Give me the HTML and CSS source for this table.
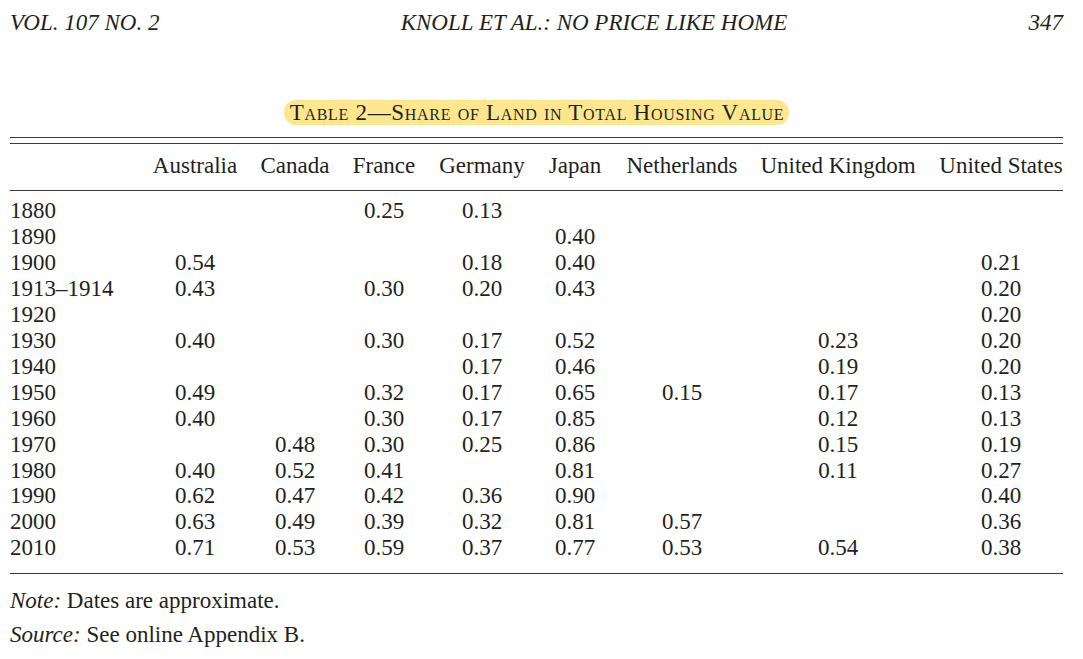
FILE: index.html
```html
<!DOCTYPE html>
<html>
<head>
<meta charset="utf-8">
<link rel="stylesheet" href="styles.css">
</head>
<body>
<div class="page">
  <header class="runhead">
    <span>VOL. 107 NO. 2</span>
    <span>KNOLL ET AL.: NO PRICE LIKE HOME</span>
    <span>347</span>
  </header>
  <div class="title-wrap">
    <span class="title">Table 2—Share of Land in Total Housing Value</span>
  </div>
  <div class="double-rule"></div>
  <table class="data">
    <colgroup>
      <col class="c0"><col class="c1"><col class="c2"><col class="c3"><col class="c4"><col class="c5"><col class="c6"><col class="c7"><col class="c8">
    </colgroup>
    <thead>
      <tr>
        <th></th><th>Australia</th><th>Canada</th><th>France</th><th>Germany</th><th>Japan</th><th>Netherlands</th><th>United Kingdom</th><th class="last">United States</th>
      </tr>
    </thead>
    <tbody>
      <tr class="first"><td>1880</td><td></td><td></td><td>0.25</td><td>0.13</td><td></td><td></td><td></td><td class="last"></td></tr>
      <tr><td>1890</td><td></td><td></td><td></td><td></td><td>0.40</td><td></td><td></td><td class="last"></td></tr>
      <tr><td>1900</td><td>0.54</td><td></td><td></td><td>0.18</td><td>0.40</td><td></td><td></td><td class="last">0.21</td></tr>
      <tr><td>1913–1914</td><td>0.43</td><td></td><td>0.30</td><td>0.20</td><td>0.43</td><td></td><td></td><td class="last">0.20</td></tr>
      <tr><td>1920</td><td></td><td></td><td></td><td></td><td></td><td></td><td></td><td class="last">0.20</td></tr>
      <tr><td>1930</td><td>0.40</td><td></td><td>0.30</td><td>0.17</td><td>0.52</td><td></td><td>0.23</td><td class="last">0.20</td></tr>
      <tr><td>1940</td><td></td><td></td><td></td><td>0.17</td><td>0.46</td><td></td><td>0.19</td><td class="last">0.20</td></tr>
      <tr><td>1950</td><td>0.49</td><td></td><td>0.32</td><td>0.17</td><td>0.65</td><td>0.15</td><td>0.17</td><td class="last">0.13</td></tr>
      <tr><td>1960</td><td>0.40</td><td></td><td>0.30</td><td>0.17</td><td>0.85</td><td></td><td>0.12</td><td class="last">0.13</td></tr>
      <tr><td>1970</td><td></td><td>0.48</td><td>0.30</td><td>0.25</td><td>0.86</td><td></td><td>0.15</td><td class="last">0.19</td></tr>
      <tr><td>1980</td><td>0.40</td><td>0.52</td><td>0.41</td><td></td><td>0.81</td><td></td><td>0.11</td><td class="last">0.27</td></tr>
      <tr><td>1990</td><td>0.62</td><td>0.47</td><td>0.42</td><td>0.36</td><td>0.90</td><td></td><td></td><td class="last">0.40</td></tr>
      <tr><td>2000</td><td>0.63</td><td>0.49</td><td>0.39</td><td>0.32</td><td>0.81</td><td>0.57</td><td></td><td class="last">0.36</td></tr>
      <tr class="lastrow"><td>2010</td><td>0.71</td><td>0.53</td><td>0.59</td><td>0.37</td><td>0.77</td><td>0.53</td><td>0.54</td><td class="last">0.38</td></tr>
    </tbody>
  </table>
  <p class="note"><em>Note:</em> Dates are approximate.</p>
  <p class="note"><em>Source:</em> See online Appendix B.</p>
</div>
</body>
</html>
```

FILE: styles.css
```css
html, body {
  margin: 0;
  padding: 0;
  background: #ffffff;
}

body {
  font-family: "Liberation Serif", "Times New Roman", serif;
  font-size: 23px;
  line-height: 26px;
  color: #231f20;
}

.page {
  width: 1053px;
  padding: 10px 0 0 10px;
}

.runhead {
  display: flex;
  justify-content: space-between;
  font-style: italic;
  height: 26px;
}

.title-wrap {
  margin-top: 64px;
  text-align: center;
  height: 25px;
}

.title {
  display: inline-block;
  font-variant: small-caps;
  letter-spacing: 0.7px;
  line-height: 25px;
  background: #fce78f;
  border-radius: 12px;
  padding: 0 5px 0 6px;
}

.double-rule {
  margin-top: 12px;
  height: 5px;
  border-top: 1.5px solid #3a3a3a;
  border-bottom: 1.5px solid #3a3a3a;
}

.data {
  width: 1053px;
  table-layout: fixed;
  border-collapse: collapse;
  border-bottom: 1.5px solid #3a3a3a;
}

.c0 { width: 130px; }
.c1 { width: 110px; }
.c2 { width: 90px; }
.c3 { width: 88px; }
.c4 { width: 108px; }
.c5 { width: 78px; }
.c6 { width: 136px; }
.c7 { width: 176px; }
.c8 { width: 137px; }

.data th,
.data td {
  padding: 0;
  text-align: center;
  font-weight: normal;
  white-space: nowrap;
  line-height: 25.95px;
}

.data th {
  padding-top: 9px;
  padding-bottom: 10.5px;
  border-bottom: 1.5px solid #3a3a3a;
  line-height: 26px;
}

.data td:first-child {
  text-align: left;
}

.data .last {
  padding-left: 13px;
}

.data tr.first td {
  padding-top: 7.5px;
}

.data tr.lastrow td {
  padding-bottom: 12px;
}

.note {
  margin: 14px 0 0 0;
  line-height: 26px;
}

.note + .note {
  margin-top: 8px;
}
```
